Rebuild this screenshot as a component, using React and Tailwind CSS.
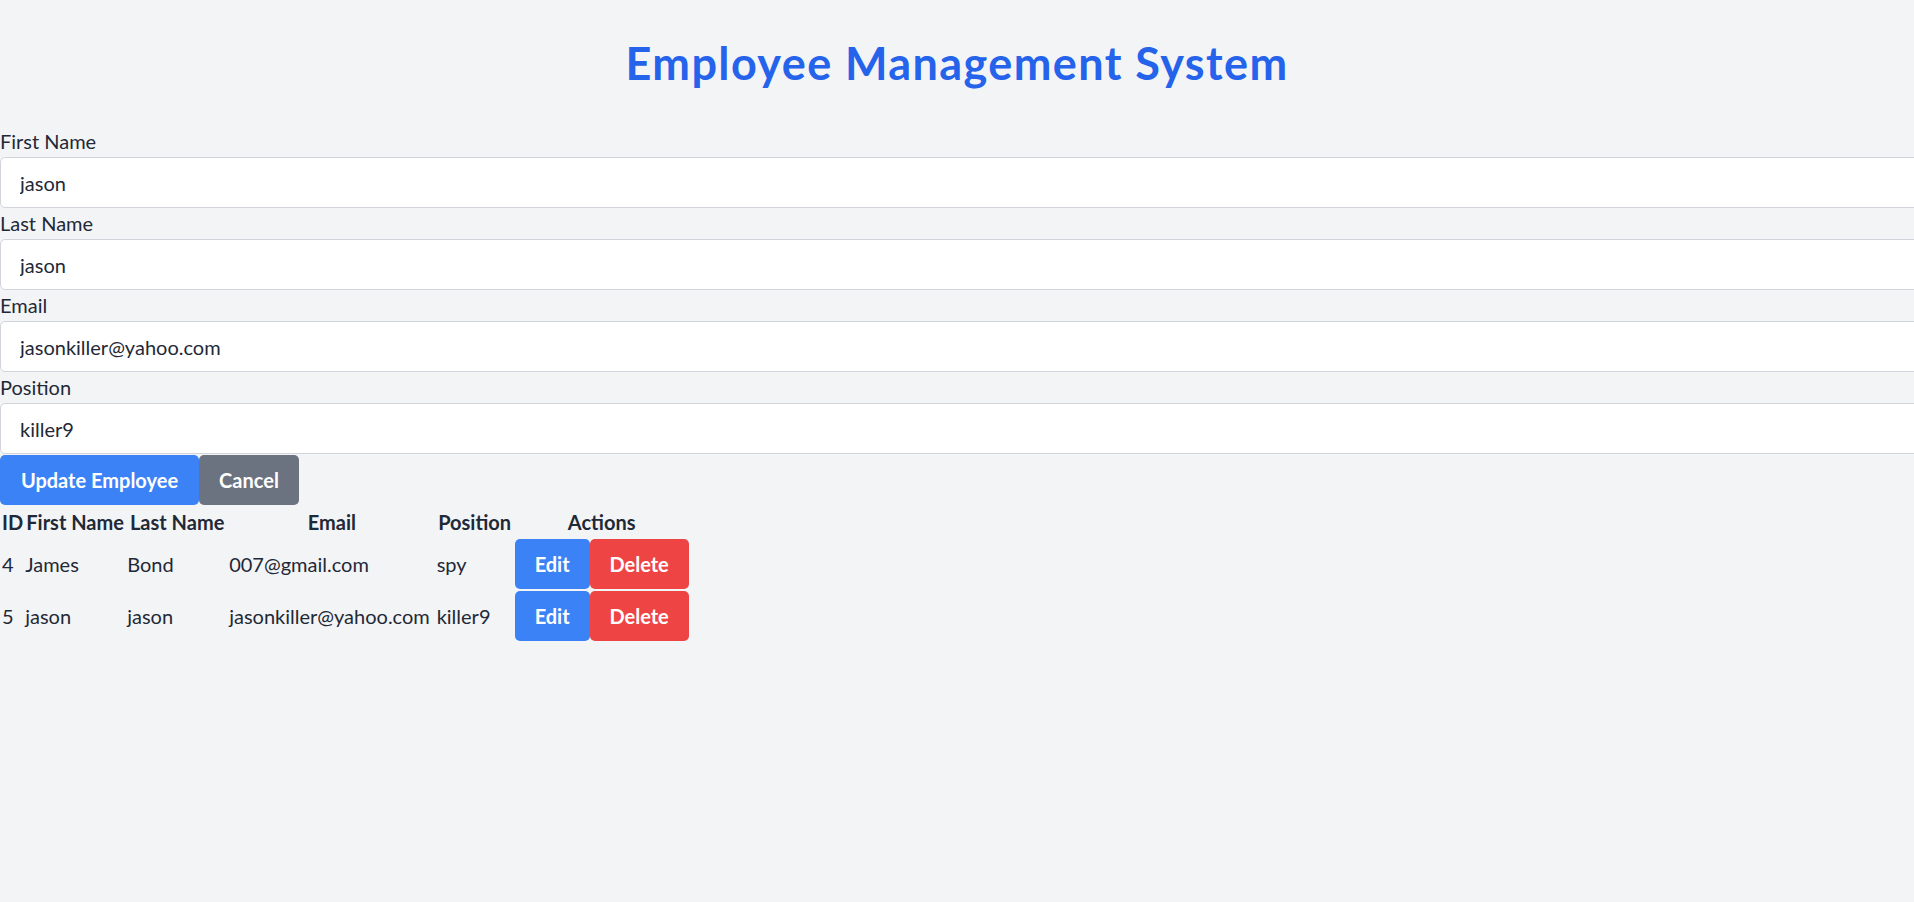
export default function App() {
  const fields = [
    ["First Name", "jason"],
    ["Last Name", "jason"],
    ["Email", "jasonkiller@yahoo.com"],
    ["Position", "killer9"],
  ];
  const employees = [
    { id: 4, first: "James", last: "Bond", email: "007@gmail.com", position: "spy" },
    { id: 5, first: "jason", last: "jason", email: "jasonkiller@yahoo.com", position: "killer9" },
  ];
  return (
    <div className="min-h-screen w-full overflow-hidden bg-[#f3f4f6] text-[#1f2937] font-[family-name:Lato,'Liberation_Sans',sans-serif] text-[20px] leading-[30px]">
      <div className="pt-[38px]">
        <h1 className="text-center text-[45px] leading-[50px] font-bold tracking-[1.4px] text-[#2563eb] mb-[38px]">
          Employee Management System
        </h1>
        <form className="flex flex-col" onSubmit={(e) => e.preventDefault()}>
          {fields.map(([label, value]) => (
            <div key={label} className="flex flex-col">
              <label className="block leading-[31px]">{label}</label>
              <input
                type="text"
                defaultValue={value}
                className="h-[51px] w-[calc(100%+12px)] rounded-[5px] border border-[#d1d5db] bg-white px-[19px] text-[20px] text-[#1f2937] outline-none"
              />
            </div>
          ))}
          <div className="mt-[1px] flex">
            <button
              type="submit"
              className="h-[50px] w-[199px] rounded-[5px] bg-[#3b82f6] font-bold text-white"
            >
              Update Employee
            </button>
            <button
              type="button"
              className="h-[50px] w-[100px] rounded-[5px] bg-[#6b7280] font-bold text-white"
            >
              Cancel
            </button>
          </div>
        </form>
        <table className="border-separate border-spacing-[2.5px]">
          <thead>
            <tr className="h-[30px]">
              <th className="w-[20px] p-0 text-center font-bold">ID</th>
              <th className="w-[100px] p-0 text-center font-bold whitespace-nowrap">First Name</th>
              <th className="w-[100px] p-0 text-center font-bold whitespace-nowrap">Last Name</th>
              <th className="w-[205.5px] p-0 text-center font-bold">Email</th>
              <th className="w-[76px] p-0 text-center font-bold">Position</th>
              <th className="w-[174px] p-0 text-center font-bold">Actions</th>
            </tr>
          </thead>
          <tbody>
            {employees.map((e) => (
              <tr key={e.id} className="h-[50px]">
                <td className="p-0 text-left">{e.id}</td>
                <td className="p-0 text-left">{e.first}</td>
                <td className="p-0 text-left">{e.last}</td>
                <td className="p-0 text-left whitespace-nowrap">{e.email}</td>
                <td className="p-0 text-left">{e.position}</td>
                <td className="p-0">
                  <div className="flex">
                    <button className="h-[50px] w-[75px] rounded-[5px] bg-[#3b82f6] font-bold text-white">
                      Edit
                    </button>
                    <button className="h-[50px] w-[99px] rounded-[5px] bg-[#ef4444] font-bold text-white">
                      Delete
                    </button>
                  </div>
                </td>
              </tr>
            ))}
          </tbody>
        </table>
      </div>
    </div>
  );
}
